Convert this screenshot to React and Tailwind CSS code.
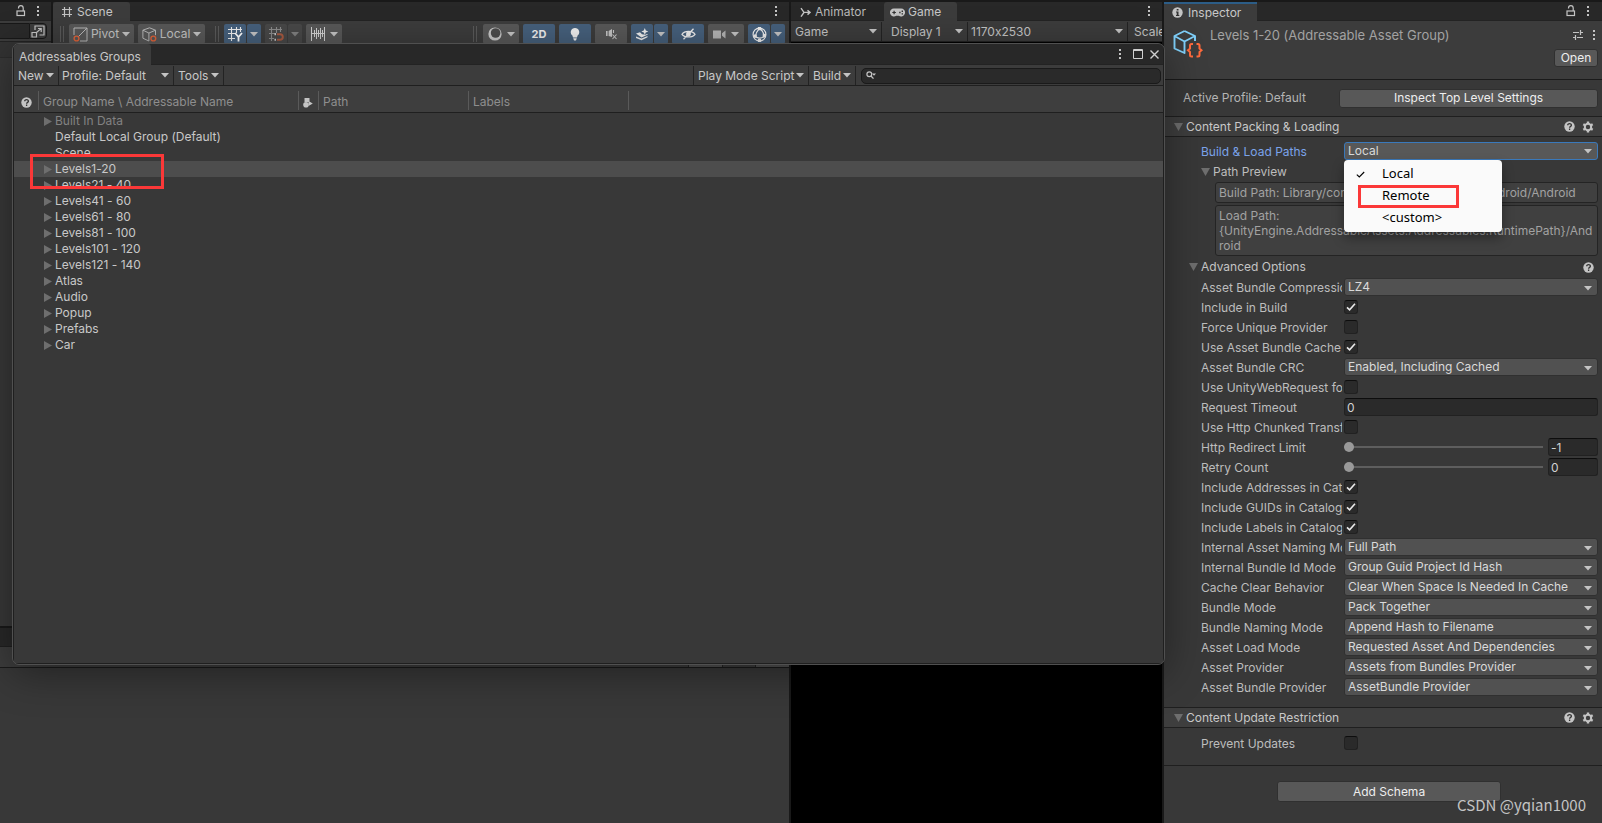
import React, { useState } from "react";

const GROUPS = [
  { name: "Built In Data", arrow: true, dim: true },
  { name: "Default Local Group (Default)" },
  { name: "Scene" },
  { name: "Levels1-20", arrow: true, selected: true },
  { name: "Levels21 - 40", arrow: true },
  { name: "Levels41 - 60", arrow: true },
  { name: "Levels61 - 80", arrow: true },
  { name: "Levels81 - 100", arrow: true },
  { name: "Levels101 - 120", arrow: true },
  { name: "Levels121 - 140", arrow: true },
  { name: "Atlas", arrow: true },
  { name: "Audio", arrow: true },
  { name: "Popup", arrow: true },
  { name: "Prefabs", arrow: true },
  { name: "Car", arrow: true },
];

const OPTIONS = [
  { id: "compression", label: "Asset Bundle Compression", type: "select", value: "LZ4" },
  { id: "include-build", label: "Include in Build", type: "check", value: true },
  { id: "force-unique", label: "Force Unique Provider", type: "check", value: false },
  { id: "use-cache", label: "Use Asset Bundle Cache", type: "check", value: true },
  { id: "crc", label: "Asset Bundle CRC", type: "select", value: "Enabled, Including Cached" },
  { id: "uwr", label: "Use UnityWebRequest for Local", type: "check", value: false },
  { id: "timeout", label: "Request Timeout", type: "text", value: "0" },
  { id: "chunked", label: "Use Http Chunked Transfer", type: "check", value: false },
  { id: "redirect", label: "Http Redirect Limit", type: "slider", value: "-1" },
  { id: "retry", label: "Retry Count", type: "slider", value: "0" },
  { id: "addresses", label: "Include Addresses in Catalog", type: "check", value: true },
  { id: "guids", label: "Include GUIDs in Catalog", type: "check", value: true },
  { id: "labels", label: "Include Labels in Catalog", type: "check", value: true },
  { id: "asset-naming", label: "Internal Asset Naming Mode", type: "select", value: "Full Path" },
  { id: "bundle-id", label: "Internal Bundle Id Mode", type: "select", value: "Group Guid Project Id Hash" },
  { id: "cache-clear", label: "Cache Clear Behavior", type: "select", value: "Clear When Space Is Needed In Cache" },
  { id: "bundle-mode", label: "Bundle Mode", type: "select", value: "Pack Together" },
  { id: "bundle-naming", label: "Bundle Naming Mode", type: "select", value: "Append Hash to Filename" },
  { id: "load-mode", label: "Asset Load Mode", type: "select", value: "Requested Asset And Dependencies" },
  { id: "provider", label: "Asset Provider", type: "select", value: "Assets from Bundles Provider" },
  { id: "bundle-provider", label: "Asset Bundle Provider", type: "select", value: "AssetBundle Provider" },
];

/* ---------- icons ---------- */

const Down = ({ className = "text-[#c4c4c4]" }) => (
  <svg width="8" height="5" viewBox="0 0 8 5" className={`shrink-0 ${className}`} aria-hidden="true">
    <path d="M0 0h8L4 4.6z" fill="currentColor" />
  </svg>
);

const Foldout = () => (
  <svg width="9" height="8" viewBox="0 0 9 8" className="shrink-0 text-[#6e6e6e]" aria-hidden="true">
    <path d="M0 0h9L4.500 8z" fill="currentColor" />
  </svg>
);

const Right = () => (
  <svg width="8" height="9" viewBox="0 0 8 9" className="shrink-0 text-[#6e6e6e]" aria-hidden="true">
    <path d="M0 0v9l8-4.500z" fill="currentColor" />
  </svg>
);

const Kebab = () => (
  <svg width="4" height="12" viewBox="0 0 4 12" fill="#c4c4c4" aria-hidden="true">
    <path d="M1 1h2v2H1zM1 5h2v2H1zM1 9h2v2H1z" />
  </svg>
);

const Lock = () => (
  <svg width="10" height="12" viewBox="0 0 10 12" fill="none" stroke="#c4c4c4" aria-hidden="true">
    <rect x="1" y="6" width="7.500" height="4.500" strokeWidth="1.200" />
    <path d="M2.500 3.500V3a2.300 2.300 0 0 1 4.700 0v3" strokeWidth="1.200" />
  </svg>
);

const Help = () => (
  <svg width="11" height="11" viewBox="0 0 11 11" aria-hidden="true">
    <circle cx="5.500" cy="5.500" r="5.200" fill="#c4c4c4" />
    <path d="M3.700 4.200c0-2.200 3.700-2.200 3.700 0 0 1.200-1.800 1.200-1.800 2.500M5.600 7.600v1.300" stroke="#333" strokeWidth="1.300" fill="none" />
  </svg>
);

const Gear = () => (
  <svg width="12" height="12" viewBox="0 0 12 12" aria-hidden="true">
    <circle cx="6" cy="6" r="3.200" fill="none" stroke="#c4c4c4" strokeWidth="2" />
    <g stroke="#c4c4c4" strokeWidth="2.400">
      <path d="M6 .6v2M6 9.400v2M1.300 3.300l1.800 1M8.900 7.700l1.800 1M1.300 8.700l1.800-1M8.900 4.300l1.800-1" />
    </g>
  </svg>
);

const Check = ({ className = "" }) => (
  <svg width="10" height="8" viewBox="0 0 10 8" fill="none" className={className} aria-hidden="true">
    <path d="M1 4.300l2.600 2.500L9 .8" stroke="currentColor" strokeWidth="1.600" />
  </svg>
);

const MenuCheck = () => (
  <svg width="9" height="7" viewBox="0 0 9 7" fill="none" aria-hidden="true">
    <path d="M.8 3.600l2.500 2.300L8.200 1" stroke="currentColor" strokeWidth="1.100" />
  </svg>
);

const HashIcon = () => (
  <svg width="12" height="12" viewBox="0 0 12 12" stroke="#c4c4c4" strokeWidth="1.200" aria-hidden="true">
    <path d="M3.500 1v10M8.500 1v10M1 3.500h10M1 8.500h10" />
  </svg>
);

const PickIcon = () => (
  <svg width="14" height="13" viewBox="0 0 14 13" fill="none" stroke="#c4c4c4" strokeWidth="1.200" aria-hidden="true">
    <path d="M4 5V1h9v9H8.500" />
    <path d="M1 7.500h4.500V12H1zM5.500 7.500L10 3.600M7 3.500h3.200V7" />
  </svg>
);

const PivotIcon = () => (
  <svg width="15" height="15" viewBox="0 0 15 15" fill="none" className="shrink-0" aria-hidden="true">
    <path d="M1 8V1h13v13H7M5 10l9-9" stroke="#b8b8b8" strokeWidth="1" />
    <circle cx="3.500" cy="11.500" r="2.400" stroke="#e0633a" strokeWidth="1.400" />
  </svg>
);

const LocalIcon = () => (
  <svg width="15" height="15" viewBox="0 0 15 15" fill="none" className="shrink-0" aria-hidden="true">
    <path d="M7.500 .8l6 2.400v5M.9 3.200v8l6 2.800V6L.9 3.200l6.600-2.400M7 6l6.500-2.800" stroke="#b8b8b8" strokeWidth="1" />
    <circle cx="11.300" cy="11.500" r="2.400" stroke="#e0633a" strokeWidth="1.400" />
  </svg>
);

const GridYIcon = () => (
  <svg width="15" height="15" viewBox="0 0 15 15" fill="none" aria-hidden="true">
    <path d="M3.500 0v14M8.500 0v6M12.500 0v5M0 2.500h14M0 6.500h8M0 11.500h7" stroke="#eee" strokeWidth="1.100" />
    <path d="M7 6l3.500 4V14.500M14 6l-3.500 4" stroke="#fff" strokeWidth="1.800" />
  </svg>
);

const SnapIcon = () => (
  <svg width="15" height="15" viewBox="0 0 15 15" fill="none" aria-hidden="true">
    <path d="M2.500 0v14M7.500 0v6M11.500 0v5M0 2.500h13M0 6.500h7M0 11.500h5" stroke="#8c8c8c" strokeWidth="1.100" />
    <path d="M8 7.200h3a2.700 2.700 0 0 1 0 5.600H8" stroke="#a85a41" strokeWidth="2" />
    <path d="M5.500 6.200H7v2H5.500zM5.500 11.800H7v2H5.500z" fill="#ccc" />
  </svg>
);

const RulerIcon = () => (
  <svg width="14" height="14" viewBox="0 0 14 14" stroke="#d0d0d0" aria-hidden="true">
    <path d="M.5 0v14M13.500 0v14M3.500 3v7M5.500 1v11M7.500 3v7M9.500 1v11M11.500 3v7M1 6.500h12" />
  </svg>
);

const ShadeIcon = () => (
  <svg width="14" height="14" viewBox="0 0 14 14" aria-hidden="true">
    <circle cx="7" cy="7" r="6.600" fill="#c8c8c8" />
    <circle cx="7.600" cy="6" r="4.800" fill="#4c4c4c" />
  </svg>
);

const BulbIcon = () => (
  <svg width="10" height="13" viewBox="0 0 10 13" fill="#eee" aria-hidden="true">
    <path d="M5 0a4.200 4.200 0 0 1 2.600 7.500L7 9.500H3l-.6-2A4.200 4.200 0 0 1 5 0zM3.200 10.300h3.600L6 12.500H4z" />
  </svg>
);

const AudioIcon = () => (
  <svg width="13" height="12" viewBox="0 0 13 12" aria-hidden="true">
    <path d="M1 3h1.600v5H1zM3.600 3L7 1v8L3.600 8z" fill="#c4c4c4" />
    <path d="M8.500 2v3M7.500 6.500l4 4.500M11.500 6.500l-4 4.500" stroke="#c4c4c4" strokeWidth="1.100" />
  </svg>
);

const FxIcon = () => (
  <svg width="14" height="13" viewBox="0 0 14 13" aria-hidden="true">
    <path d="M1 5.500l4-1.300 2 2 3.500.6L12 6l1 .6-6.500 3zM1 8.600l5.500 2 6-2.600v1.300l-6 3L1 10z" fill="#eee" />
    <path d="M9.800 0l1 2.400 2.500 1-2.500 1-1 2.400-1-2.400-2.500-1 2.500-1z" fill="#eee" />
  </svg>
);

const EyeOffIcon = () => (
  <svg width="15" height="12" viewBox="0 0 15 12" fill="none" stroke="#eee" strokeWidth="1.300" aria-hidden="true">
    <path d="M1 6.300C3.500 2.500 11.500 2.500 14 6.300 11.500 9.800 3.500 9.800 1 6.300zM12.500 .8l-10 10.500" />
    <circle cx="7.500" cy="6" r="1.800" fill="#eee" />
  </svg>
);

const CameraIcon = () => (
  <svg width="13" height="9" viewBox="0 0 13 9" fill="#b4b4b4" aria-hidden="true">
    <path d="M0 .5h8v8H0zM9 3.200L12.500 .5v8L9 5.800z" />
  </svg>
);

const GizmoIcon = () => (
  <svg width="15" height="15" viewBox="0 0 14 14" fill="none" stroke="#eee" strokeWidth="1.100" aria-hidden="true">
    <circle cx="7" cy="7" r="6" />
    <path d="M7 1C4.500 4 3.500 6 3 9M7 1c2.500 2 4 5 4.500 7.500M1.500 8c3.500 3 7.500 3 11 0" />
    <path d="M5.500 0h3v3h-3zM1.500 7h3v3h-3zM10 6.500h3v3h-3zM5.500 11h3v3h-3z" fill="#eee" stroke="none" />
  </svg>
);

const AnimatorIcon = () => (
  <svg width="11" height="11" viewBox="0 0 11 11" fill="none" stroke="#c4c4c4" strokeWidth="1.400" aria-hidden="true">
    <path d="M1 1.200l3 4.200-3 4.200M4 5.400h6M7.500 3.200L10 5.400 7.500 7.600" />
  </svg>
);

const PadIcon = () => (
  <svg width="15" height="9" viewBox="0 0 15 9" aria-hidden="true">
    <path d="M4.200.5h6.600a4 4 0 1 1-2 7.300H6.200a4 4 0 1 1-2-7.300z" fill="#c4c4c4" />
    <path d="M2.300 4.500h3.600M4.100 2.700v3.600" stroke="#333" strokeWidth="1.200" />
    <path d="M9.200 3.800h1.400v1.400H9.200zM11.600 2.600H13V4h-1.400zM11.600 5.200H13v1.400h-1.400z" fill="#333" />
  </svg>
);

const BlobIcon = () => (
  <svg width="10" height="11" viewBox="0 0 10 11" fill="#c4c4c4" aria-hidden="true">
    <path d="M1.500 1h5v4h-5zM5.500 4L9.800 6.500 5.500 9z" />
    <circle cx="3" cy="7.800" r="2.800" />
  </svg>
);

const SearchIcon = () => (
  <svg width="10" height="9" viewBox="0 0 10 9" fill="none" className="shrink-0" aria-hidden="true">
    <circle cx="3.300" cy="3.300" r="2.400" stroke="#c4c4c4" strokeWidth="1.200" />
    <path d="M5 5l2.500 2.600" stroke="#c4c4c4" strokeWidth="1.300" />
    <path d="M6 2.500h4L8 4.700z" fill="#c4c4c4" />
  </svg>
);

const InfoIcon = () => (
  <svg width="11" height="11" viewBox="0 0 11 11" aria-hidden="true">
    <circle cx="5.500" cy="5.500" r="5.200" fill="#c4c4c4" />
    <path d="M4.700 2h1.800v1.600H4.700zM4 4.500h2.500V8h.8v1H4V8h.7V5.500H4z" fill="#333" />
  </svg>
);

const PresetIcon = () => (
  <svg width="12" height="12" viewBox="0 0 12 12" stroke="#c4c4c4" strokeWidth="1.200" aria-hidden="true">
    <path d="M1 3.500h6M8.500 1v5M8.500 3.500H11M1 8.500h2.500M3.500 6v5M5 8.500h6" />
  </svg>
);

const GroupIcon = () => (
  <svg width="30" height="29" viewBox="0 0 30 29" fill="none" className="shrink-0" aria-hidden="true">
    <path d="M11.500 2L22 7v5M11.500 2L1.500 7v12.500L11.500 24V12.500L1.500 7M11.500 12.500L22 7" stroke="#7fd0fa" strokeWidth="1.900" strokeLinejoin="round" />
    <path d="M20 15h-1.500c-1 0-1.500.5-1.500 1.500v3l-2 1.700 2 1.700v3c0 1 .5 1.500 1.500 1.500H20M23.500 15H25c1 0 1.500.5 1.500 1.500v3l2 1.700-2 1.700v3c0 1-.5 1.500-1.500 1.500h-1.500" stroke="#ff6a3c" strokeWidth="2" />
  </svg>
);

/* ---------- small parts ---------- */

const IconButton = ({ label, children }) => (
  <button type="button" aria-label={label} className="flex h-4 items-center justify-center">
    {children}
  </button>
);

const SceneButton = ({ label, on, dim, children, className = "" }) => (
  <button
    type="button"
    aria-label={label}
    className={`flex h-5 items-center justify-center rounded-[2px] ${on ? "bg-[#46607c] text-[#eeeeee]" : dim ? "bg-[#484848] text-[#808080]" : "bg-[#585858] text-[#c4c4c4]"} ${className}`}
  >
    {children}
  </button>
);

const Handle = () => <div className="h-4 w-1 border-x border-[#5a5a5a]" />;

const Split = ({ label, on, dim, children }) => (
  <div className="flex gap-px">
    <SceneButton label={label} on={on} dim={dim} className="w-[22px]">{children}</SceneButton>
    <SceneButton label={`${label} options`} on={on} dim={dim} className="w-[14px]">
      <Down className={dim ? "text-[#808080]" : "text-[#c4c4c4]"} />
    </SceneButton>
  </div>
);

const BarSelect = ({ label, value, className = "" }) => (
  <div className={`relative flex items-center border-r border-[#232323] ${className}`}>
    <select aria-label={label} className="h-5 w-full appearance-none bg-transparent pr-5 outline-none">
      <option>{value}</option>
    </select>
    <span className="pointer-events-none absolute right-1"><Down /></span>
  </div>
);

const MenuButton = ({ children, className = "" }) => (
  <button type="button" className={`flex items-center justify-between border-[#232323] px-[4px] whitespace-nowrap ${className}`}>
    {children}
    <Down />
  </button>
);

const Dropdown = ({ id, value, focused, onMouseDown }) => (
  <div className="relative flex">
    <select
      id={id}
      onMouseDown={onMouseDown}
      className={`h-[18px] w-full appearance-none rounded-[3px] border pr-6 pl-[3px] leading-4 text-[#dadada] outline-none ${focused ? "border-[#3a79bb] bg-[#585858]" : "border-[#303030] bg-[#515151]"}`}
    >
      <option>{value}</option>
    </select>
    <span className="pointer-events-none absolute inset-y-0 right-[6px] flex items-center"><Down /></span>
  </div>
);

const fieldClass =
  "h-[18px] rounded-[3px] border border-[#212121] border-t-[#0d0d0d] bg-[#2a2a2a] px-[2px] leading-4 text-[#d2d2d2] outline-none";

const Control = ({ option }) => {
  const { id, type, value, label } = option;
  if (type === "select") return <Dropdown id={id} value={value} />;
  if (type === "text") return <input id={id} defaultValue={value} className={`w-full ${fieldClass}`} />;
  if (type === "slider")
    return (
      <div className="flex items-start gap-[5px]">
        <input
          id={id}
          type="range"
          min={value}
          max="128"
          defaultValue={value}
          className="h-[18px] min-w-0 flex-1 appearance-none bg-transparent [&::-webkit-slider-runnable-track]:h-[2px] [&::-webkit-slider-runnable-track]:bg-[#5e5e5e] [&::-webkit-slider-thumb]:-mt-1 [&::-webkit-slider-thumb]:size-[10px] [&::-webkit-slider-thumb]:appearance-none [&::-webkit-slider-thumb]:rounded-full [&::-webkit-slider-thumb]:bg-[#999999]"
        />
        <input aria-label={`${label} value`} defaultValue={value} className={`w-[50px] ${fieldClass}`} />
      </div>
    );
  return (
    <div className="flex h-[18px] items-center">
      <div className="relative flex size-[14px] items-center justify-center">
        <input
          id={id}
          type="checkbox"
          defaultChecked={value}
          className="peer size-[14px] appearance-none rounded-[3px] border border-[#212121] border-t-[#0d0d0d] bg-[#2a2a2a]"
        />
        <Check className="pointer-events-none absolute hidden text-[#e8e8e8] peer-checked:block" />
      </div>
    </div>
  );
};

const OptionRow = ({ option }) => (
  <div className="grid h-5 grid-cols-[141px_minmax(0,1fr)] gap-[2px]">
    <label htmlFor={option.id} className="overflow-hidden whitespace-nowrap leading-5 text-[#bdbdbd]">
      {option.label}
    </label>
    <Control option={option} />
  </div>
);

const SectionHeader = ({ children }) => (
  <div className="flex h-[21px] items-center border-y border-[#1f1f1f] bg-[#3e3e3e] pr-2 pl-[10px]">
    <button type="button" className="flex flex-1 items-center gap-[3px] text-[#c8c8c8]">
      <Foldout />
      {children}
    </button>
    <div className="flex gap-[7px]">
      <IconButton label="Help"><Help /></IconButton>
      <IconButton label="Settings"><Gear /></IconButton>
    </div>
  </div>
);

/* ---------- panels ---------- */

function HierarchyPanel() {
  return (
    <section className="flex w-[51px] flex-col bg-[#383838]">
      <div className="flex h-[19px] items-center justify-end gap-[10px] border-b border-[#232323] bg-[#282828] pr-[11px]">
        <IconButton label="Lock"><Lock /></IconButton>
        <IconButton label="Menu"><Kebab /></IconButton>
      </div>
      <div className="flex h-[21px] items-center border-b border-[#232323] bg-[#3c3c3c] pr-1">
        <input aria-label="Search hierarchy" className="h-4 w-0 min-w-0 flex-1 border-y border-[#181818] bg-[#2a2a2a] outline-none" />
        <button type="button" aria-label="Open search" className="flex h-4 w-[18px] items-center justify-center rounded-r border border-[#181818]">
          <PickIcon />
        </button>
      </div>
      <div className="h-4 border-b border-[#2c2c2c] bg-[#333333]" />
    </section>
  );
}

function ScenePanel() {
  return (
    <section className="flex min-w-0 flex-1 flex-col bg-[#383838]">
      <div className="flex h-[19px] bg-[#282828]">
        <button type="button" className="flex w-[77px] items-center gap-1 rounded-t-[3px] bg-[#3c3c3c] pl-2 pt-px text-[#c8c8c8]">
          <HashIcon />
          Scene
        </button>
        <div className="flex flex-1 items-center justify-end border-b border-[#232323] pr-[11px]">
          <IconButton label="Scene menu"><Kebab /></IconButton>
        </div>
      </div>
      <div className="flex h-[26px] items-center gap-1 bg-[#3c3c3c] pr-1 pl-[7px]">
        <Handle />
        <SceneButton label="Pivot" className="ml-px w-[65px] gap-[3px]"><PivotIcon />Pivot<Down /></SceneButton>
        <SceneButton label="Local" className="w-[67px] gap-[3px]"><LocalIcon />Local<Down /></SceneButton>
        <div className="mr-px ml-[6px]"><Handle /></div>
        <Split label="Grid" on><GridYIcon /></Split>
        <Split label="Snap" dim><SnapIcon /></Split>
        <SceneButton label="Increment" className="w-9 gap-[5px]"><RulerIcon /><Down /></SceneButton>
        <div className="flex-1" />
        <div className="mr-[2px]"><Handle /></div>
        <SceneButton label="Shading" className="w-9 gap-[5px]"><ShadeIcon /><Down /></SceneButton>
        <SceneButton label="2D" on className="w-8 text-[11px] font-bold">2D</SceneButton>
        <SceneButton label="Lighting" on className="w-8"><BulbIcon /></SceneButton>
        <SceneButton label="Audio" className="w-8"><AudioIcon /></SceneButton>
        <Split label="Effects" on><FxIcon /></Split>
        <SceneButton label="Visibility" on className="w-8"><EyeOffIcon /></SceneButton>
        <SceneButton label="Camera" className="w-9 gap-[5px]"><CameraIcon /><Down /></SceneButton>
        <Split label="Gizmos" on><GizmoIcon /></Split>
      </div>
    </section>
  );
}

function ProjectPanel() {
  return (
    <section className="flex h-[195px] flex-col bg-[#383838]">
      <div className="h-[19px] border-b border-[#1f1f1f] bg-[#282828]" />
      <div className="flex h-[21px] justify-end border-b border-[#1a1a1a] bg-[#3c3c3c]">
        <div className="w-[35px] border-x border-[#232323] bg-[#505050]" />
        <div className="w-8" />
        <div className="w-[34px] border-l border-[#232323] bg-[#505050]" />
      </div>
    </section>
  );
}

function GamePanel() {
  return (
    <section className="flex w-[371px] flex-col bg-black">
      <div className="flex h-[19px] bg-[#282828]">
        <button type="button" className="flex w-[93px] items-center gap-1 border-b border-[#232323] pl-[9px] pt-[2px] text-[#b8b8b8]">
          <AnimatorIcon />
          Animator
        </button>
        <button type="button" className="flex w-[73px] items-center gap-[3px] rounded-t-[3px] bg-[#3c3c3c] pl-[6px] pt-px text-[#c8c8c8]">
          <PadIcon />
          Game
        </button>
        <div className="flex flex-1 items-center justify-end border-b border-[#232323] pr-[11px]">
          <IconButton label="Game menu"><Kebab /></IconButton>
        </div>
      </div>
      <div className="flex h-[21px] overflow-hidden border-b border-[#232323] bg-[#3c3c3c] pt-px text-[#c4c4c4]">
        <BarSelect label="View" value="Game" className="w-[91px] shrink-0 pl-1" />
        <BarSelect label="Display" value="Display 1" className="w-[86px] shrink-0 pl-[9px]" />
        <BarSelect label="Resolution" value="1170x2530" className="w-[160px] shrink-0 pl-[3px]" />
        <span className="pl-[6px] leading-5">Scale</span>
      </div>
    </section>
  );
}

const HeadCell = ({ children }) => (
  <th className="h-[27px] border-b border-[#1f1f1f] p-0 pt-[2px] text-left font-normal">
    <div className="flex h-[19px] items-center border-r border-[#5a5a5a] pt-1 pl-1">{children}</div>
  </th>
);

function GroupsWindow() {
  return (
    <section className="absolute top-[43px] -right-[3px] bottom-[158px] left-[12px] z-10 flex flex-col overflow-hidden rounded-[7px] border border-[#505050] bg-[#383838] shadow-[0_8px_40px_rgba(0,0,0,0.4)]">
      <div className="flex flex-1 flex-col border-x border-b border-[#1f1f1f]">
        <div className="flex h-[21px] bg-[#282828]">
          <h1 className="w-[137px] rounded-t-[3px] bg-[#3c3c3c] pl-[5px] leading-[25px] text-[#c8c8c8]">Addressables Groups</h1>
          <div className="flex flex-1 items-center justify-end gap-[6px] border-b border-[#232323] pr-[4px]">
            <IconButton label="Window menu"><Kebab /></IconButton>
            <IconButton label="Maximize">
              <svg width="16" height="10" viewBox="0 0 16 10" fill="none" stroke="#d0d0d0" aria-hidden="true">
                <path d="M5.500.5h9v9h-9zM5 1.500h10" />
              </svg>
            </IconButton>
            <IconButton label="Close">
              <svg width="9" height="9" viewBox="0 0 9 9" stroke="#d0d0d0" strokeWidth="1.400" aria-hidden="true">
                <path d="M.5.5l8 8M8.500.5l-8 8" />
              </svg>
            </IconButton>
          </div>
        </div>
        <div className="flex h-[21px] border-b border-[#1f1f1f] bg-[#3c3c3c] pt-px text-[#c8c8c8]">
          <MenuButton className="w-[45px] border-r">New</MenuButton>
          <BarSelect label="Profile" value="Profile: Default" className="w-[115px] pl-[3px]" />
          <MenuButton className="w-[50px] border-r">Tools</MenuButton>
          <div className="flex-1" />
          <MenuButton className="w-[116px] border-x">Play Mode Script</MenuButton>
          <MenuButton className="w-[47px] border-r">Build</MenuButton>
          <div className="flex items-center pr-[2px] pl-[5px]">
            <div className="flex h-4 w-[300px] items-center gap-1 rounded-[5px] border border-[#1a1a1a] bg-[#2a2a2a] px-1">
              <SearchIcon />
              <input aria-label="Search groups" className="h-3 min-w-0 flex-1 bg-transparent outline-none" />
            </div>
          </div>
        </div>
        <table className="w-full table-fixed border-separate border-spacing-0">
          <colgroup>
            <col className="w-[25px]" />
            <col className="w-[260px]" />
            <col className="w-5" />
            <col className="w-[150px]" />
            <col className="w-[160px]" />
            <col />
          </colgroup>
          <thead className="bg-[#3e3e3e] text-[#8e8e8e]">
            <tr>
              <HeadCell><span className="ml-[3px]"><Help /></span></HeadCell>
              <HeadCell>Group Name \ Addressable Name</HeadCell>
              <HeadCell><BlobIcon /></HeadCell>
              <HeadCell>Path</HeadCell>
              <HeadCell>Labels</HeadCell>
              <th className="border-b border-[#1f1f1f]" />
            </tr>
          </thead>
          <tbody>
            {GROUPS.map((g) => (
              <tr key={g.name} className={g.selected ? "bg-[#4d4d4d]" : ""}>
                <td className="relative p-0">
                  {g.selected && (
                    <div className="pointer-events-none absolute -top-[7px] left-4 z-10 h-[35px] w-[134px] border-[3px] border-[#fb3838]" />
                  )}
                </td>
                <td colSpan={5} className={`h-4 p-0 pl-[5px] leading-4 ${g.dim ? "text-[#828282]" : "text-[#c8c8c8]"}`}>
                  <div className="flex items-center gap-[3px]">
                    <span className="w-2">{g.arrow && <Right />}</span>
                    {g.name}
                  </div>
                </td>
              </tr>
            ))}
          </tbody>
        </table>
      </div>
    </section>
  );
}

function PathMenu({ onPick }) {
  return (
    <div
      role="menu"
      className="absolute top-[18px] left-0 z-20 w-[158px] rounded bg-[#fafafa] py-[3px] font-['Noto_Sans',sans-serif] text-[13px] text-black shadow-[0_6px_12px_rgba(0,0,0,0.35)]"
    >
      {["Local", "Remote", "<custom>"].map((name) => (
        <button key={name} type="button" role="menuitem" onClick={onPick} className="flex h-[22px] w-full items-center pl-3">
          <span className="w-[26px]">{name === "Local" && <MenuCheck />}</span>
          {name}
        </button>
      ))}
      <div className="pointer-events-none absolute top-[25px] left-[14px] h-[23px] w-[101px] border-[3px] border-[#fb3838]" />
    </div>
  );
}

function Inspector() {
  const [open, setOpen] = useState(true);
  const buttonClass = "rounded-[3px] border border-[#303030] bg-[#585858] text-[#eeeeee]";
  const pathClass = "rounded-[3px] border border-[#242424] bg-[#404040] px-[3px] py-[2px] leading-[15px] break-all";
  return (
    <section className="flex w-[438px] flex-col bg-[#383838]">
      <div className="flex h-[19px] bg-[#282828]">
        <button type="button" className="flex w-[93px] items-center gap-[5px] border-t-2 border-[#2c5d87] bg-[#3c3c3c] pl-2 text-[#c8c8c8]">
          <InfoIcon />
          Inspector
        </button>
        <div className="flex flex-1 items-center justify-end gap-[10px] border-b border-[#232323] pr-3">
          <IconButton label="Lock"><Lock /></IconButton>
          <IconButton label="Menu"><Kebab /></IconButton>
        </div>
      </div>

      <header className="flex h-[59px] border-b border-[#1a1a1a] bg-[#3c3c3c] pt-2 pl-[9px]">
        <GroupIcon />
        <h2 className="flex-1 pl-[7px] text-[13px] leading-[12px] text-[#a2a2a2]">Levels 1-20 (Addressable Asset Group)</h2>
        <div className="flex flex-col items-end">
          <div className="flex h-3 items-center gap-[8px] pr-[6px]">
            <IconButton label="Presets"><PresetIcon /></IconButton>
            <IconButton label="Asset menu"><Kebab /></IconButton>
          </div>
          <button type="button" className={`mt-2 mr-1 h-[18px] w-[44px] leading-4 ${buttonClass}`}>Open</button>
        </div>
      </header>

      <div className="flex h-[36px] items-center pr-1 pl-[19px]">
        <span className="w-[156px] text-[#b4b4b4]">Active Profile: Default</span>
        <button type="button" className={`h-[19px] flex-1 leading-4 ${buttonClass}`}>Inspect Top Level Settings</button>
      </div>

      <SectionHeader>Content Packing &amp; Loading</SectionHeader>

      <div className="flex flex-col pt-[5px] pr-1 pl-[37px]">
        <div className="grid h-5 grid-cols-[141px_minmax(0,1fr)] gap-[2px]">
          <label htmlFor="paths" className="leading-5 text-[#7ba3ea]">Build &amp; Load Paths</label>
          <div className="relative">
            <Dropdown
              id="paths"
              value="Local"
              focused
              onMouseDown={(e) => {
                e.preventDefault();
                setOpen(!open);
              }}
            />
            {open && <PathMenu onPick={() => setOpen(false)} />}
          </div>
        </div>
        <button type="button" className="flex h-5 items-center gap-[3px] text-[#bdbdbd]">
          <Foldout />
          Path Preview
        </button>
        <div className="ml-[14px] flex flex-col gap-[2px] text-[#a2a2a2]">
          <p className={pathClass}>Build Path: Library/com.unity.addressables/aa/Android/Android</p>
          <p className={pathClass}>
            Load Path:
            <br />
            {"{UnityEngine.AddressableAssets.Addressables.RuntimePath}/Android"}
          </p>
        </div>
        <div className="-ml-3 flex h-[22px] items-center pr-1">
          <button type="button" className="flex flex-1 items-center gap-[3px] text-[#c4c4c4]">
            <Foldout />
            Advanced Options
          </button>
          <IconButton label="Help"><Help /></IconButton>
        </div>
        {OPTIONS.map((o) => (
          <OptionRow key={o.id} option={o} />
        ))}
      </div>

      <div className="mt-[9px]">
        <SectionHeader>Content Update Restriction</SectionHeader>
      </div>
      <div className="border-b border-[#1f1f1f] pt-[6px] pb-[11px] pl-[37px]">
        <OptionRow option={{ id: "prevent", label: "Prevent Updates", type: "check", value: false }} />
      </div>
      <div className="flex justify-center pt-[15px] pl-3">
        <button type="button" className={`h-[21px] w-[224px] leading-4 ${buttonClass}`}>Add Schema</button>
      </div>
      <p className="-mt-[5px] self-end pr-4 font-['Noto_Sans_CJK_SC',sans-serif] text-[15px] leading-4 whitespace-nowrap text-[#c4c4c4]">
        CSDN @yqian1000
      </p>
    </section>
  );
}

export default function App() {
  return (
    <main className="flex min-h-screen gap-[2px] bg-[#191919] pt-[2px] font-['Inter',sans-serif] text-xs [font-feature-settings:'calt'_0]">
      <div className="relative -mt-[2px] flex min-w-0 flex-1 gap-[2px] pt-[2px]">
        <div className="flex min-w-0 flex-1 flex-col gap-[2px]">
          <div className="flex flex-1 gap-[2px]">
            <HierarchyPanel />
            <ScenePanel />
          </div>
          <ProjectPanel />
        </div>
        <GamePanel />
        <GroupsWindow />
      </div>
      <Inspector />
    </main>
  );
}
